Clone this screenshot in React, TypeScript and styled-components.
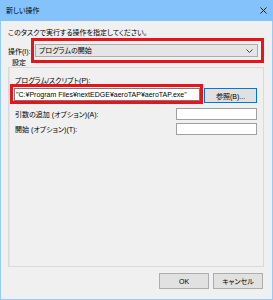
import styled, { createGlobalStyle } from "styled-components";

const GlobalStyle = createGlobalStyle`
  html, body {
    margin: 0;
    padding: 0;
    overflow: hidden;
    background: #ffffff;
  }
  * {
    box-sizing: border-box;
  }
`;

const FONT = `"Liberation Sans", "Noto Sans CJK JP", sans-serif`;

export default function App() {
  return (
    <>
      <GlobalStyle />
      <Window>
        <TitleBar>
          <TitleText>新しい操作</TitleText>
          <CloseIcon width="7" height="7" viewBox="0 0 7 7">
            <path d="M0.5 0.5 L6.5 6.5 M6.5 0.5 L0.5 6.5" stroke="#1a1a1a" strokeWidth="1" />
          </CloseIcon>
        </TitleBar>
        <Body>
          <Description>このタスクで実行する操作を指定してください。</Description>
          <ActionRow>
            <ActionLabel>操作(I):</ActionLabel>
            <Highlight $pad="3px 3px 3px 1px">
              <Select>
                <span>プログラムの開始</span>
                <svg width="7" height="4" viewBox="0 0 7 4">
                  <path d="M0.5 0.5 L3.5 3.5 L6.5 0.5" fill="none" stroke="#444" strokeWidth="1" />
                </svg>
              </Select>
            </Highlight>
          </ActionRow>
          <GroupLabel>設定</GroupLabel>
          <Group>
            <FieldLabel>プログラム/スクリプト(P):</FieldLabel>
            <PathRow>
              <Highlight $pad="1px 0 0 1px" $shift={-5}>
                <PathInput>"C:¥Program Files¥nextEDGE¥aeroTAP¥aeroTAP.exe"</PathInput>
              </Highlight>
              <BrowseButton>参照(B)...</BrowseButton>
            </PathRow>
            <OptionRow $top={4}>
              <span>引数の追加 (オプション)(A):</span>
              <SmallInput />
            </OptionRow>
            <OptionRow $top={3}>
              <span>開始 (オプション)(T):</span>
              <SmallInput />
            </OptionRow>
          </Group>
          <Footer>
            <DialogButton>OK</DialogButton>
            <DialogButton>キャンセル</DialogButton>
          </Footer>
        </Body>
      </Window>
    </>
  );
}

const Window = styled.div`
  width: 273px;
  height: 300px;
  display: flex;
  flex-direction: column;
  font-family: ${FONT};
  font-size: 7px;
  font-feature-settings: "palt";
  color: #000;
`;

const TitleBar = styled.div`
  height: 21px;
  background: #84c2fb;
  display: flex;
  align-items: center;
  justify-content: space-between;
  padding: 0 6px 1px 6px;
  flex-shrink: 0;
`;

const TitleText = styled.span`
  font-size: 7px;
  line-height: 9px;
`;

const CloseIcon = styled.svg`
  display: block;
  margin-right: 0px;
`;

const Body = styled.div`
  flex: 1;
  display: flex;
  flex-direction: column;
  background: #f0f0f0;
  border: 1px solid #95cbfb;
  border-top: none;
  padding: 0 8px 10px 7px;
`;

const Description = styled.div`
  margin-top: 7px;
  line-height: 9px;
  height: 9px;
  white-space: nowrap;
`;

const ActionRow = styled.div`
  margin-top: 1px;
  display: flex;
  align-items: center;
  margin-bottom: -5px;
`;

const ActionLabel = styled.span`
  width: 23px;
  white-space: nowrap;
  overflow: hidden;
  line-height: 9px;
  margin-top: 2px;
`;

const Highlight = styled.div<{ $pad: string; $shift?: number }>`
  border: 3px solid #e8141c;
  padding: ${(p) => p.$pad};
  margin-left: ${(p) => p.$shift ?? 0}px;
  flex: 1;
  display: flex;
`;

const Select = styled.div`
  flex: 1;
  height: 13px;
  background: #e5e5e5;
  border: 1px solid #acacac;
  display: flex;
  align-items: center;
  justify-content: space-between;
  padding: 0 4px 0 3px;
  line-height: 9px;
`;

const GroupLabel = styled.div`
  line-height: 9px;
  height: 9px;
  padding-left: 4px;
  position: relative;
  width: 30px;
`;

const Group = styled.div`
  flex: 1;
  border: 1px solid #dadada;
  box-shadow: inset 1px 0 0 #e4e4e4;
  padding: 9px 6px 0 6px;
  display: flex;
  flex-direction: column;
`;

const FieldLabel = styled.div`
  line-height: 8px;
  height: 8px;
  white-space: nowrap;
`;

const PathRow = styled.div`
  margin-top: -1px;
  display: flex;
  align-items: flex-start;
  gap: 1px;
`;

const PathInput = styled.div`
  width: 186px;
  height: 13px;
  background: #fff;
  border: 1px solid #7a7a7a;
  padding-left: 1px;
  line-height: 11px;
  white-space: nowrap;
  overflow: hidden;
`;

const BrowseButton = styled.div`
  width: 53px;
  height: 15px;
  margin-top: 4px;
  background: #e1e1e1;
  border: 1px solid #0078d7;
  display: flex;
  align-items: center;
  justify-content: center;
  white-space: nowrap;
`;

const OptionRow = styled.div<{ $top: number }>`
  margin-top: ${(p) => p.$top}px;
  display: flex;
  align-items: center;
  justify-content: space-between;
  height: 12px;
  white-space: nowrap;
`;

const SmallInput = styled.div`
  width: 81px;
  height: 12px;
  background: #fff;
  border: 1px solid #a0a0a0;
`;

const Footer = styled.div`
  margin-top: 6px;
  display: flex;
  justify-content: flex-end;
  gap: 4px;
  padding-right: 1px;
`;

const DialogButton = styled.div`
  width: 50px;
  height: 16px;
  background: #e1e1e1;
  border: 1px solid #adadad;
  display: flex;
  align-items: center;
  justify-content: center;
`;
